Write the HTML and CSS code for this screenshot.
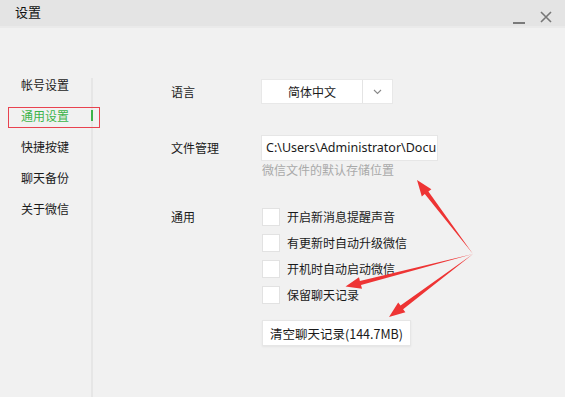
FILE: index.html
```html
<!DOCTYPE html>
<html lang="zh-CN">
<head>
  <meta charset="UTF-8" />
  <title>设置</title>
  <link rel="stylesheet" href="styles.css">
</head>
<body>
  <div class="window">
    <div class="titlebar">
      <span class="title">设置</span>
      <div class="controls">
        <span class="btn-min"></span>
        <svg class="btn-close" width="12" height="12" viewBox="0 0 12 12">
          <path d="M1 1 L11 11 M11 1 L1 11" stroke="#777" stroke-width="1.6" fill="none"/>
        </svg>
      </div>
    </div>

    <div class="main">
      <div class="nav">
        <div class="nav-item">帐号设置</div>
        <div class="nav-item active">通用设置</div>
        <div class="nav-item">快捷按键</div>
        <div class="nav-item">聊天备份</div>
        <div class="nav-item">关于微信</div>
      </div>
      <div class="divider"><span class="marker"></span></div>

      <div class="panel">
        <div class="row">
          <div class="label">语言</div>
          <div class="select">
            <span class="select-value">简体中文</span>
            <span class="select-arrow">
              <svg width="9" height="6" viewBox="0 0 9 6"><path d="M1 1 L4.5 4.5 L8 1" stroke="#888" stroke-width="1.1" fill="none"/></svg>
            </span>
          </div>
        </div>

        <div class="row row-file">
          <div class="label">文件管理</div>
          <div>
            <div class="path">C:\Users\Administrator\Docu</div>
            <div class="hint">微信文件的默认存储位置</div>
          </div>
        </div>

        <div class="row row-general">
          <div class="label">通用</div>
          <div class="options">
            <label class="option"><span class="box"></span>开启新消息提醒声音</label>
            <label class="option"><span class="box"></span>有更新时自动升级微信</label>
            <label class="option"><span class="box"></span>开机时自动启动微信</label>
            <label class="option"><span class="box"></span>保留聊天记录</label>
            <button class="clear-btn">清空聊天记录(144.7MB)</button>
          </div>
        </div>
      </div>
    </div>

    <svg class="annotations" width="565" height="397" viewBox="0 0 565 397">
      <rect x="8.5" y="107.5" width="91" height="20" fill="none" stroke="#e8424f" stroke-width="1"/>
      <polygon fill="#ee3434" points="473,254 428.4,191.5 431.4,189.2 417,180 421.8,196.4 424.8,194.1"/>
      <polygon fill="#ee3434" points="473,254 359.9,280.9 359,277.2 345.5,286.5 362,288.8 361,285.1"/>
      <polygon fill="#ee3434" points="473,254 400.5,305.6 398.2,302.6 389,317 405.4,312.2 403.1,309.2"/>
    </svg>
  </div>
</body>
</html>
```

FILE: styles.css
```css
body {
  margin: 0;
  font-family: "Noto Sans CJK SC", "Noto Sans", sans-serif;
  font-size: 12px;
  color: #1a1a1a;
  background: #f1f1f1;
}
.window {
  position: relative;
  width: 565px;
  height: 397px;
  overflow: hidden;
  background: #f1f1f1;
}
.titlebar {
  height: 26px;
  background: #e4e4e4;
  border-bottom: 2px solid #eaeaea;
  display: flex;
  align-items: flex-start;
  justify-content: space-between;
}
.title {
  margin: 3px 0 0 15px;
  font-size: 13px;
  line-height: 18px;
  color: #111;
}
.controls {
  display: flex;
  align-items: center;
  gap: 15px;
  margin: 9px 13px 0 0;
}
.btn-min {
  width: 12px;
  height: 2px;
  background: #7a7a7a;
  margin-top: 13px;
}
.btn-close {
  display: block;
}
.main {
  display: flex;
  height: 369px;
}
.nav {
  width: 91px;
  padding-top: 41px;
}
.nav-item {
  padding-left: 21px;
  line-height: 31px;
  height: 31px;
}
.nav-item.active {
  color: #3cb44a;
}
.divider {
  width: 2px;
  margin-top: 50px;
  background: #e6e6e6;
}
.marker {
  display: block;
  width: 2px;
  height: 11px;
  margin-top: 32px;
  background: #3cb44a;
}
.panel {
  padding: 52px 0 0 78px;
}
.row {
  display: grid;
  grid-template-columns: 91px auto;
  align-items: start;
}
.label {
  line-height: 23px;
}
.select {
  display: flex;
  width: 130px;
  height: 23px;
  background: #fff;
  box-shadow: 0 0 0 1px #e8e8e8;
}
.select-value {
  width: 100px;
  border-right: 1px solid #e4e4e4;
  text-align: center;
  line-height: 23px;
}
.select-arrow {
  flex: 1;
  display: flex;
  align-items: center;
  justify-content: center;
}
.row-file {
  margin-top: 33px;
}
.row-file .label {
  line-height: 24px;
}
.path {
  width: 171px;
  height: 24px;
  padding-left: 4px;
  background: #fff;
  box-shadow: 0 0 0 1px #e6e6e6;
  font-family: "Noto Sans", sans-serif;
  font-size: 12.5px;
  line-height: 24px;
  white-space: nowrap;
  overflow: hidden;
}
.hint {
  margin-top: 2px;
  color: #a9a9a9;
  line-height: 16px;
}
.row-general {
  margin-top: 30px;
}
.row-general .label {
  line-height: 18px;
}
.options {
  display: flex;
  flex-direction: column;
  align-items: flex-start;
  gap: 8px;
}
.option {
  display: flex;
  align-items: center;
  gap: 7px;
  height: 18px;
  line-height: 18px;
}
.box {
  width: 16px;
  height: 16px;
  background: #fff;
  border: 1px solid #e2e2e2;
}
.clear-btn {
  margin-top: 8px;
  width: 149px;
  height: 26px;
  padding: 0;
  background: #fff;
  border: 1px solid #e6e6e6;
  box-shadow: 0 1px 2px rgba(0,0,0,0.06);
  font-family: "Noto Sans CJK SC", "Noto Sans", sans-serif;
  font-size: 12.5px;
  color: #1a1a1a;
}
.annotations {
  position: absolute;
  left: 0;
  top: 0;
  pointer-events: none;
}
```
